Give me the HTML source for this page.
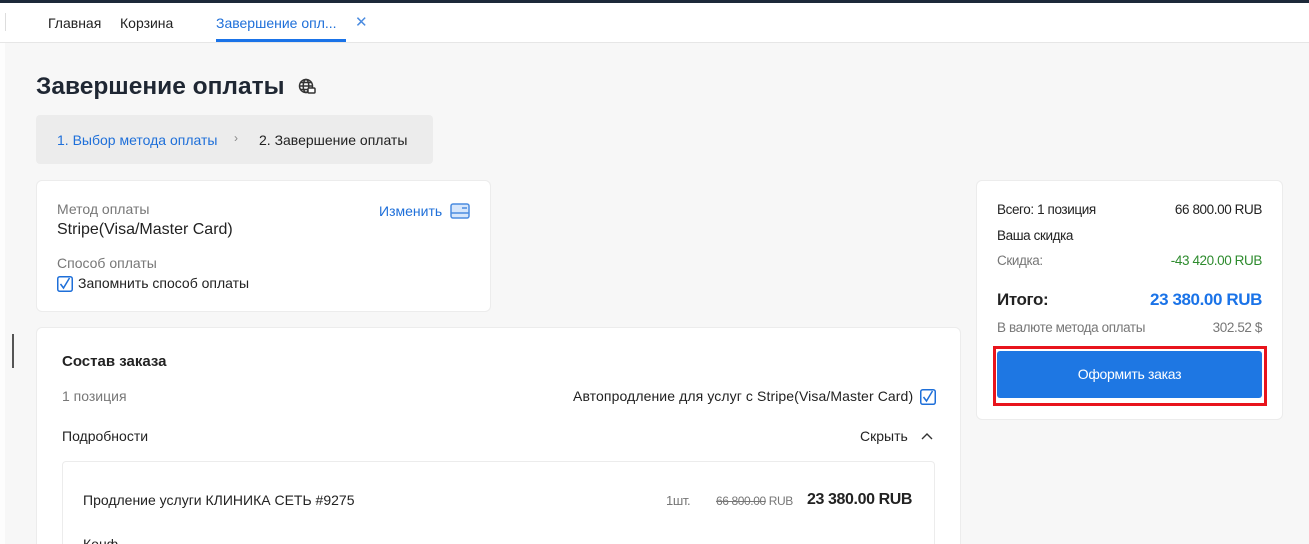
<!DOCTYPE html>
<html><head><meta charset="utf-8"><style>
*{margin:0;padding:0;box-sizing:border-box}
html{width:1309px;height:544px;overflow:hidden}
body{width:1309px;height:544px;overflow:hidden;background:#f7f7f7;font-family:"Liberation Sans","Noto Sans CJK SC",sans-serif;color:#222;position:relative;font-size:14px}
.a{position:absolute;white-space:nowrap}
.card{position:absolute;background:#fff;border:1px solid #ececec;border-radius:6px}
.g{color:#777}
.b{color:#1e6fd9}
.cond{letter-spacing:-0.4px}
</style></head><body>
<div class="a" style="left:0;top:0;width:1309px;height:3px;background:#1d2939"></div>
<div class="a" style="left:0;top:3px;width:1309px;height:40px;background:#fff;border-bottom:1px solid #e6e6e6"></div>
<div class="a" style="left:0;top:43px;width:5px;height:501px;background:#fdfdfd"></div>
<div class="a" style="left:5px;top:13px;width:1px;height:18px;background:#ddd"></div>
<div class="a" style="left:48px;top:15px">Главная</div>
<div class="a" style="left:120px;top:15px">Корзина</div>
<div class="a b" style="left:216px;top:15px">Завершение опл...</div>
<div class="a" style="left:355px;top:13px;color:#4a8be0;font-size:15px">✕</div>
<div class="a" style="left:216px;top:39px;width:130px;height:3px;background:#1a73e8"></div>

<div class="a" style="left:36px;top:73px;font-size:24.5px;font-weight:bold;color:#1f2733">Завершение оплаты</div>
<svg class="a" style="left:298px;top:78px" width="18" height="18" viewBox="0 0 18 18" fill="none" stroke="#333" stroke-width="1.5"><circle cx="8" cy="8" r="6.5"/><ellipse cx="8" cy="8" rx="2.8" ry="6.5"/><path d="M1.5 8h13M2.5 4.5h11M2.5 11.5h11"/><rect x="10" y="10" width="7" height="5" rx="1" fill="#fff"/></svg>

<div class="a" style="left:36px;top:115px;width:397px;height:49px;background:#ececec;border-radius:4px"></div>
<div class="a b" style="left:57px;top:132px">1. Выбор метода оплаты</div>
<div class="a" style="left:234px;top:131px;color:#888;font-size:12px">›</div>
<div class="a" style="left:259px;top:132px">2. Завершение оплаты</div>

<div class="card" style="left:36px;top:180px;width:455px;height:132px"></div>
<div class="a g" style="left:57px;top:201px">Метод оплаты</div>
<div class="a" style="left:57px;top:221px;font-size:16px">Stripe(Visa/Master Card)</div>
<div class="a b" style="left:379px;top:203px">Изменить</div>
<svg class="a" style="left:450px;top:203px" width="20" height="16" viewBox="0 0 20 16"><rect x="1" y="1" width="18" height="14" rx="2" fill="#d6e6fb" stroke="#4a8be0" stroke-width="1.5"/><path d="M1 10h18" stroke="#4a8be0" stroke-width="1.5"/><path d="M12 5h5" stroke="#4a8be0" stroke-width="1.5"/></svg>
<div class="a g" style="left:57px;top:255px">Способ оплаты</div>
<svg class="a" style="left:57px;top:276px" width="16" height="16" viewBox="0 0 16 16" fill="none" stroke="#1e6fd9" stroke-width="1.5"><rect x="0.75" y="0.75" width="14.5" height="14.5" rx="2"/><path d="M3.5 8l3 4 6-10"/></svg>
<div class="a" style="left:78px;top:275px">Запомнить способ оплаты</div>

<div class="card" style="left:36px;top:327px;width:925px;height:230px"></div>
<div class="a" style="left:12px;top:334px;width:2px;height:34px;background:#555"></div>
<div class="a" style="left:62px;top:353px;font-weight:bold;font-size:15px">Состав заказа</div>
<div class="a g" style="left:62px;top:388px">1 позиция</div>
<div class="a" style="left:573px;top:388px;letter-spacing:0.1px">Автопродление для услуг с Stripe(Visa/Master Card)</div>
<svg class="a" style="left:920px;top:389px" width="16" height="16" viewBox="0 0 16 16" fill="none" stroke="#1e6fd9" stroke-width="1.5"><rect x="0.75" y="0.75" width="14.5" height="14.5" rx="2"/><path d="M3.5 8l3 4 6-10"/></svg>
<div class="a" style="left:62px;top:428px">Подробности</div>
<div class="a" style="left:860px;top:428px">Скрыть</div>
<svg class="a" style="left:920px;top:431px" width="14" height="10" viewBox="0 0 14 10" fill="none" stroke="#333" stroke-width="1.4"><path d="M2 8l5-5 5 5"/></svg>
<div class="card" style="left:62px;top:461px;width:873px;height:100px;border-radius:4px"></div>
<div class="a" style="left:83px;top:492px">Продление услуги КЛИНИКА СЕТЬ #9275</div>
<div class="a g cond" style="left:666px;top:493px;font-size:13px">1шт.</div>
<div class="a g cond" style="left:716px;top:494px;font-size:12px"><s>66 800.00</s> RUB</div>
<div class="a cond" style="left:807px;top:491px;font-size:16px;font-weight:bold">23 380.00 RUB</div>
<div class="a" style="left:83px;top:536px">Конф</div>

<div class="card" style="left:976px;top:180px;width:307px;height:240px"></div>
<div class="a cond" style="left:997px;top:202px;font-size:13.5px">Всего: 1 позиция</div>
<div class="a cond" style="left:1262px;top:202px;font-size:13.5px;transform:translateX(-100%)">66 800.00 RUB</div>
<div class="a cond" style="left:997px;top:228px;font-size:13.5px">Ваша скидка</div>
<div class="a g cond" style="left:997px;top:253px;font-size:13.5px">Скидка:</div>
<div class="a cond" style="left:1262px;top:253px;font-size:13.5px;color:#2e8b2e;transform:translateX(-100%)">-43 420.00 RUB</div>
<div class="a cond" style="left:997px;top:290px;font-size:17px;font-weight:bold">Итого:</div>
<div class="a cond b" style="left:1262px;top:290px;font-size:17px;font-weight:bold;transform:translateX(-100%);color:#1a73e8">23 380.00 RUB</div>
<div class="a g cond" style="left:997px;top:320px;font-size:13.5px">В валюте метода оплаты</div>
<div class="a g cond" style="left:1262px;top:320px;font-size:13.5px;transform:translateX(-100%)">302.52 $</div>
<div class="a" style="left:993px;top:346px;width:274px;height:60px;border:3px solid #e8141c"></div>
<div class="a" style="left:997px;top:351px;width:265px;height:47px;background:#1e77e3;border-radius:3px;color:#fff;text-align:center;line-height:47px;font-size:14px;letter-spacing:-0.3px">Оформить заказ</div>
</body></html>
